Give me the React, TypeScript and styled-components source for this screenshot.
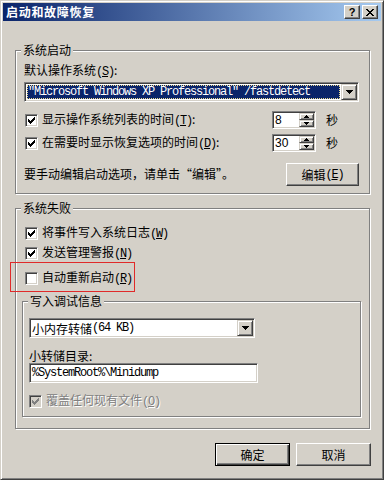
import React from "react";
import styled, { createGlobalStyle, css } from "styled-components";

const FACE = "#D4D0C8";
const SHADOW = "#808080";
const DARK = "#404040";

const GlobalStyle = createGlobalStyle`
  * { box-sizing: border-box; }
  html, body { margin: 0; padding: 0; background: ${FACE}; }
  body {
    font-family: "Noto Sans CJK SC", "Liberation Sans", sans-serif;
    font-size: 12px;
    color: #000;
  }
`;

const raised = css`
  border: 1px solid;
  border-color: #fff ${DARK} ${DARK} #fff;
  box-shadow: inset -1px -1px 0 ${SHADOW};
  background: ${FACE};
`;

const sunken = css`
  border: 1px solid;
  border-color: ${SHADOW} #fff #fff ${SHADOW};
  box-shadow: inset 1px 1px 0 ${DARK}, inset -1px -1px 0 ${FACE};
  padding: 1px;
`;

const Window = styled.div`
  width: 384px;
  height: 480px;
  background: ${FACE};
  border: 1px solid;
  border-color: ${FACE} ${DARK} ${DARK} ${FACE};
  box-shadow: inset 1px 1px 0 #fff, inset -1px -1px 0 ${SHADOW};
  padding: 2px;
  display: flex;
  flex-direction: column;
`;

const TitleBar = styled.div`
  height: 18px;
  flex: none;
  display: flex;
  align-items: center;
  padding: 0 3px 0 3px;
  background: linear-gradient(to right, #0a246a, #a6caf0);
`;

const TitleText = styled.div`
  flex: 1;
  color: #fff;
  font-weight: bold;
  font-size: 12px;
  letter-spacing: 0.7px;
  line-height: 14px;
`;

const CaptionButton = styled.div<{ $gap?: number }>`
  ${raised};
  width: 16px;
  height: 14px;
  margin-left: ${(p) => p.$gap ?? 0}px;
  display: flex;
  align-items: center;
  justify-content: center;
  font-family: "Liberation Sans", sans-serif;
  font-weight: bold;
  font-size: 11px;
  line-height: 10px;
`;

const Body = styled.div`
  flex: 1;
  display: flex;
  flex-direction: column;
  padding: 29px 11px 0 12px;
`;

const Group = styled.div<{
  $padL: number;
  $padR: number;
  $padB: number;
  $mt?: number;
  $ml?: number;
  $mr?: number;
}>`
  display: flex;
  flex-direction: column;
  border: 1px solid ${SHADOW};
  box-shadow: inset 1px 1px 0 #fff, 1px 1px 0 #fff;
  padding: 0 ${(p) => p.$padR}px ${(p) => p.$padB}px ${(p) => p.$padL}px;
  margin: ${(p) => p.$mt ?? 0}px ${(p) => p.$mr ?? 0}px 0 ${(p) => p.$ml ?? 0}px;
`;

const GroupTitle = styled.div<{ $ml: number }>`
  align-self: flex-start;
  margin: -8px 0 0 ${(p) => p.$ml}px;
  padding: 0 2px;
  background: ${FACE};
  height: 14px;
  line-height: 14px;
  white-space: nowrap;
`;

const FieldLabel = styled.div<{ $mt: number }>`
  margin-top: ${(p) => p.$mt}px;
  height: 14px;
  line-height: 14px;
  white-space: nowrap;
`;

const Combo = styled.div<{ $mt: number; $w?: number }>`
  ${sunken};
  background: #fff;
  height: 20px;
  width: ${(p) => (p.$w ? `${p.$w}px` : "auto")};
  margin-top: ${(p) => p.$mt}px;
  display: flex;
`;

const ComboField = styled.div<{ $selected?: boolean }>`
  flex: 1;
  display: flex;
  align-items: center;
  white-space: nowrap;
  overflow: hidden;
  ${(p) =>
    p.$selected
      ? css`
          margin: 1px;
          background: #0a246a;
          color: #fff;
          border: 1px dotted #e8d890;
        `
      : css`
          padding-left: 1px;
        `}
`;

const DropButton = styled.div`
  ${raised};
  border-color: ${FACE} ${DARK} ${DARK} ${FACE};
  box-shadow: inset 1px 1px 0 #fff, inset -1px -1px 0 ${SHADOW};
  width: 16px;
  flex: none;
  display: flex;
  align-items: center;
  justify-content: center;
`;

const Mono = styled.span`
  font-family: "Liberation Mono", monospace;
  font-size: 12px;
  letter-spacing: -1.2px;
  line-height: 14px;
`;

const Row = styled.div<{ $mt: number; $h: number; $pl?: number }>`
  display: flex;
  align-items: center;
  height: ${(p) => p.$h}px;
  margin-top: ${(p) => p.$mt}px;
  padding-left: ${(p) => p.$pl ?? 0}px;
`;

const Marked = styled(Row)`
  position: relative;
  &::after {
    content: "";
    position: absolute;
    left: -15px;
    top: -8px;
    width: 123px;
    height: 28px;
    border: 1px solid #e02a2a;
    pointer-events: none;
  }
`;

const Box = styled.span<{ $disabled?: boolean }>`
  ${sunken};
  width: 13px;
  height: 13px;
  flex: none;
  background: ${(p) => (p.$disabled ? FACE : "#fff")};
  display: flex;
  align-items: center;
  justify-content: center;
`;

const CheckText = styled.span<{ $disabled?: boolean }>`
  margin-left: 4px;
  line-height: 14px;
  white-space: nowrap;
  flex: 1;
  ${(p) =>
    p.$disabled &&
    css`
      color: ${SHADOW};
      text-shadow: 1px 1px 0 #fff;
    `}
`;

const Spin = styled.div`
  ${sunken};
  width: 44px;
  height: 18px;
  flex: none;
  background: #fff;
  display: flex;
  margin-right: 10px;
`;

const SpinValue = styled.div`
  flex: 1;
  padding-left: 1px;
  line-height: 14px;
  font-family: "Liberation Sans", sans-serif;
  font-size: 12px;
`;

const SpinButtons = styled.div`
  width: 15px;
  display: flex;
  flex-direction: column;
`;

const SpinButton = styled.div`
  ${raised};
  border-color: ${FACE} ${DARK} ${DARK} ${FACE};
  box-shadow: inset 1px 1px 0 #fff, inset -1px -1px 0 ${SHADOW};
  flex: 1;
  display: flex;
  align-items: center;
  justify-content: center;
`;

const Unit = styled.span`
  width: 33px;
  flex: none;
  line-height: 14px;
`;

const HintRow = styled.div`
  display: flex;
  align-items: center;
  justify-content: space-between;
  margin-top: 11px;
`;

const HintText = styled.span`
  line-height: 14px;
  padding-bottom: 2px;
  white-space: nowrap;
`;

const PushButton = styled.div<{ $w: number; $default?: boolean }>`
  ${raised};
  width: ${(p) => p.$w}px;
  height: 23px;
  display: flex;
  align-items: center;
  justify-content: center;
  line-height: 14px;
  ${(p) =>
    p.$default &&
    css`
      border-color: #000;
      box-shadow: inset 1px 1px 0 #fff, inset -1px -1px 0 ${DARK},
        inset -2px -2px 0 ${SHADOW};
    `}
`;

const TextBox = styled.div`
  ${sunken};
  padding: 1px 2px;
  width: 229px;
  height: 20px;
  background: #fff;
  display: flex;
  align-items: center;
`;

const Footer = styled.div`
  display: flex;
  justify-content: flex-end;
  gap: 6px;
  margin: 14px -1px 0 0;
`;

const Key = ({ k }: { k: string }) => (
  <Mono>
    (<u>{k}</u>)
  </Mono>
);

const Check = ({ color = "#000" }: { color?: string }) => (
  <svg width="7" height="7" viewBox="0 0 7 7" shapeRendering="crispEdges">
    <g fill={color}>
      <rect x="0" y="2" width="1" height="3" />
      <rect x="1" y="3" width="1" height="3" />
      <rect x="2" y="4" width="1" height="3" />
      <rect x="3" y="3" width="1" height="3" />
      <rect x="4" y="2" width="1" height="3" />
      <rect x="5" y="1" width="1" height="3" />
      <rect x="6" y="0" width="1" height="3" />
    </g>
  </svg>
);

const DownArrow = () => (
  <svg width="7" height="4" viewBox="0 0 7 4" shapeRendering="crispEdges">
    <g fill="#000">
      <rect x="0" y="0" width="7" height="1" />
      <rect x="1" y="1" width="5" height="1" />
      <rect x="2" y="2" width="3" height="1" />
      <rect x="3" y="3" width="1" height="1" />
    </g>
  </svg>
);

const SmallArrow = ({ up }: { up?: boolean }) => (
  <svg width="5" height="3" viewBox="0 0 5 3" shapeRendering="crispEdges">
    <g fill="#000" transform={up ? "" : "translate(0 3) scale(1 -1)"}>
      <rect x="2" y="0" width="1" height="1" />
      <rect x="1" y="1" width="3" height="1" />
      <rect x="0" y="2" width="5" height="1" />
    </g>
  </svg>
);

const CloseGlyph = () => (
  <svg width="8" height="7" viewBox="0 0 8 7" shapeRendering="crispEdges">
    <g fill="#000">
      <rect x="0" y="0" width="2" height="1" />
      <rect x="6" y="0" width="2" height="1" />
      <rect x="1" y="1" width="2" height="1" />
      <rect x="5" y="1" width="2" height="1" />
      <rect x="2" y="2" width="4" height="1" />
      <rect x="3" y="3" width="2" height="1" />
      <rect x="2" y="4" width="4" height="1" />
      <rect x="1" y="5" width="2" height="1" />
      <rect x="5" y="5" width="2" height="1" />
      <rect x="0" y="6" width="2" height="1" />
      <rect x="6" y="6" width="2" height="1" />
    </g>
  </svg>
);

const SpinBox = ({ value }: { value: string }) => (
  <Spin>
    <SpinValue>{value}</SpinValue>
    <SpinButtons>
      <SpinButton>
        <SmallArrow up />
      </SpinButton>
      <SpinButton>
        <SmallArrow />
      </SpinButton>
    </SpinButtons>
  </Spin>
);

export default function App() {
  return (
    <>
      <GlobalStyle />
      <Window>
        <TitleBar>
          <TitleText>启动和故障恢复</TitleText>
          <CaptionButton>?</CaptionButton>
          <CaptionButton $gap={2}>
            <CloseGlyph />
          </CaptionButton>
        </TitleBar>
        <Body>
          <Group $padL={8} $padR={10} $padB={7}>
            <GroupTitle $ml={-3}>系统启动</GroupTitle>
            <FieldLabel $mt={6}>
              默认操作系统<Key k="S" />:
            </FieldLabel>
            <Combo $mt={5}>
              <ComboField $selected>
                <Mono>"Microsoft Windows XP Professional" /fastdetect</Mono>
              </ComboField>
              <DropButton>
                <DownArrow />
              </DropButton>
            </Combo>
            <Row $mt={9} $h={18} $pl={1}>
              <Box>
                <Check />
              </Box>
              <CheckText>
                显示操作系统列表的时间<Key k="T" />:
              </CheckText>
              <SpinBox value="8" />
              <Unit>秒</Unit>
            </Row>
            <Row $mt={5} $h={18} $pl={1}>
              <Box>
                <Check />
              </Box>
              <CheckText>
                在需要时显示恢复选项的时间<Key k="D" />:
              </CheckText>
              <SpinBox value="30" />
              <Unit>秒</Unit>
            </Row>
            <HintRow>
              <HintText>要手动编辑启动选项，请单击“编辑”。</HintText>
              <PushButton $w={73}>
                编辑<Key k="E" />
              </PushButton>
            </HintRow>
          </Group>

          <Group $padL={9} $padR={0} $padB={11} $mt={14}>
            <GroupTitle $ml={-4}>系统失败</GroupTitle>
            <Row $mt={10} $h={16}>
              <Box>
                <Check />
              </Box>
              <CheckText>
                将事件写入系统日志<Key k="W" />
              </CheckText>
            </Row>
            <Row $mt={4} $h={16}>
              <Box>
                <Check />
              </Box>
              <CheckText>
                发送管理警报<Key k="N" />
              </CheckText>
            </Row>
            <Marked $mt={9} $h={16}>
              <Box />
              <CheckText>
                自动重新启动<Key k="R" />
              </CheckText>
            </Marked>

            <Group $padL={6} $padR={0} $padB={7} $mt={15} $ml={-3} $mr={8}>
              <GroupTitle $ml={-1}>写入调试信息</GroupTitle>
              <Combo $mt={10} $w={226}>
                <ComboField>
                  小内存转储<Mono>(64 KB)</Mono>
                </ComboField>
                <DropButton>
                  <DownArrow />
                </DropButton>
              </Combo>
              <FieldLabel $mt={11}>小转储目录:</FieldLabel>
              <TextBox>
                <Mono>%SystemRoot%\Minidump</Mono>
              </TextBox>
              <Row $mt={10} $h={16}>
                <Box $disabled>
                  <Check color={SHADOW} />
                </Box>
                <CheckText $disabled>
                  覆盖任何现有文件<Key k="O" />
                </CheckText>
              </Row>
            </Group>
          </Group>

          <Footer>
            <PushButton $w={75} $default>
              确定
            </PushButton>
            <PushButton $w={75}>取消</PushButton>
          </Footer>
        </Body>
      </Window>
    </>
  );
}
